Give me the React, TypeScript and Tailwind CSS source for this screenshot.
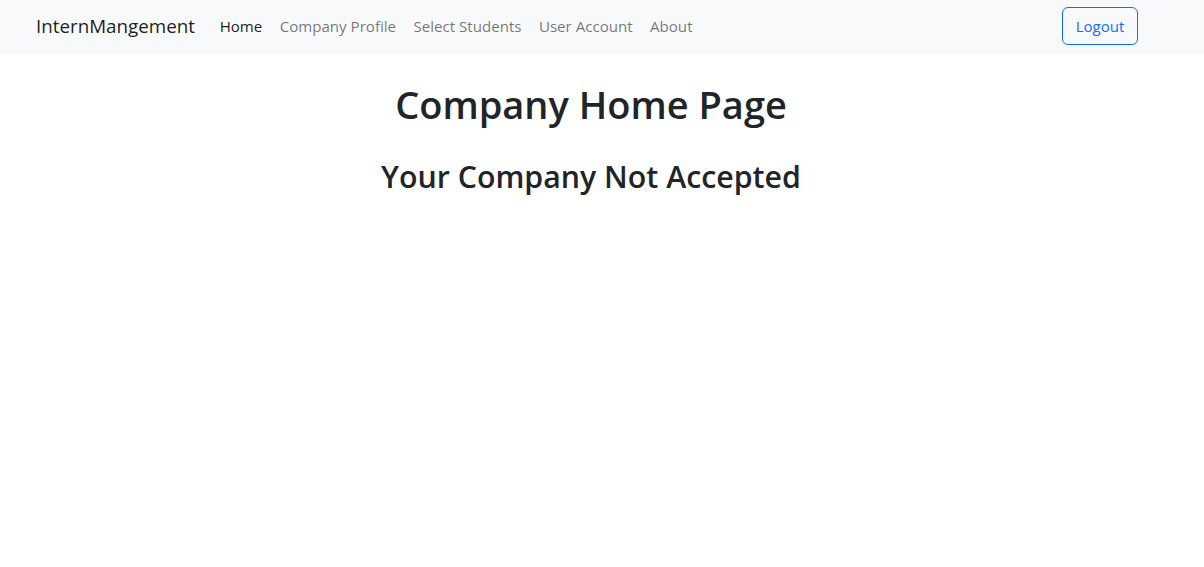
export default function App() {
  const links = ["Home", "Company Profile", "Select Students", "User Account", "About"]

  return (
    <div className="min-h-screen bg-white text-[#212529]" style={{ fontFamily: '"Segoe UI", "Open Sans", "Noto Sans", sans-serif' }}>
      {/* Navbar */}
      <nav className="bg-[#f8f9fa] h-[54px] pb-[2px] flex items-center pl-[36px] pr-[66px]">
        <a className="text-[18.8px] leading-[30px] text-[rgba(0,0,0,0.9)] mr-[16px]">InternMangement</a>
        <ul className="flex items-center">
          {links.map((l, i) => (
            <li key={l}>
              <a
                className={
                  "px-[8.7px] text-[15.1px] leading-[24px] " +
                  (i === 0 ? "text-[rgba(0,0,0,0.9)]" : "text-[rgba(0,0,0,0.55)]")
                }
              >
                {l}
              </a>
            </li>
          ))}
        </ul>
        <button className="ml-auto h-[38px] w-[76px] text-[15px] leading-[24px] text-[#0d6efd] border border-[#0d6efd] rounded-[6px]">
          Logout
        </button>
      </nav>

      <main className="text-center pr-[22px]">
        <h1 className="text-[38px] leading-[48px] font-semibold mt-[26px] mb-[8px]">Company Home Page</h1>
        <h2 className="text-[30.3px] leading-[38px] font-semibold mt-[30px]">Your Company Not Accepted</h2>
      </main>
    </div>
  )
}
